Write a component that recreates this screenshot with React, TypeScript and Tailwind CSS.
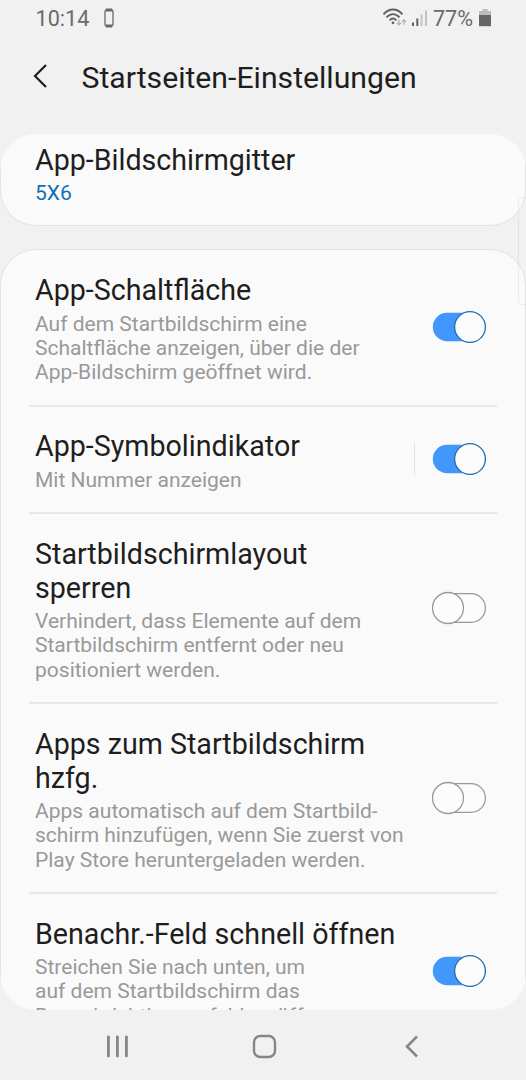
import { ReactNode } from "react";

type ToggleProps = {
  on: boolean;
};

type RowProps = {
  title: ReactNode;
  lines: string[];
  on: boolean;
  split?: boolean;
  last?: boolean;
};

const Toggle = ({ on }: ToggleProps) => (
  <svg width="56" height="34" viewBox="0 0 56 34" className="shrink-0">
    {on ? (
      <>
        <rect x="1.8" y="2.8" width="52" height="28.4" rx="14.2" fill="#4297fd" />
        <circle cx="39" cy="17" r="15.4" fill="#fcfcfc" stroke="#1a6fae" strokeWidth="1.3" />
      </>
    ) : (
      <>
        <rect x="2" y="2.7" width="52.4" height="28.6" rx="14.3" fill="#fcfcfc" stroke="#999" strokeWidth="1.3" />
        <circle cx="17" cy="17" r="15.5" fill="#fcfcfc" stroke="#999" strokeWidth="1.3" />
      </>
    )}
  </svg>
);

const Row = ({ title, lines, on, split, last }: RowProps) => (
  <div>
    <div className="flex items-center justify-between pl-[35px] pr-[39px] pt-[24.5px] pb-[21.4px]">
      <div>
        <h2 className="mb-[3.5px] text-[28.65px] leading-[33.8px] text-[#1e1e1e] whitespace-nowrap">{title}</h2>
        {lines.map((line) => (
          <p key={line} className="text-[21.03px] leading-[24.3px] text-[#999] whitespace-nowrap">
            {line}
          </p>
        ))}
      </div>
      <div className="mb-[4px] flex items-center gap-4">
        {split && <div className="w-px h-8 bg-[#e2e2e2]"></div>}
        <Toggle on={on} />
      </div>
    </div>
    {!last && <div className="-my-px mx-[29px] h-[2px] bg-[#e7e7e7]"></div>}
  </div>
);

const StatusBar = () => (
  <div className="flex h-9 items-center justify-between pl-[35.5px] pr-[35px] text-[#6a6a6a]">
    <div className="flex items-center">
      <span className="mt-px text-[21.6px] leading-9">10:14</span>
      <svg width="10" height="20" viewBox="0 0 10 20" className="ml-[15px]">
        <rect x="1" y="2" width="8" height="16" rx="1.8" fill="none" stroke="currentColor" strokeWidth="1.3" />
        <path d="M2 .6h6l.8 3H1.2zM2 19.4h6l.8-3H1.2z" fill="currentColor" />
      </svg>
    </div>
    <div className="flex items-center">
      <svg width="46" height="20" viewBox="0 0 46 20" fill="none">
        <g stroke="#606060" strokeWidth="1.9">
          <path d="M.5 6.3C6-.2 14-.2 19.5 6.3" />
          <path d="M3.5 9.4c4-4.3 9-4.3 13 0" />
          <path d="M6.6 12.3c2.2-2.2 4.6-2.2 6.8 0" />
        </g>
        <circle cx="10" cy="14.8" r="1.4" fill="#606060" />
        <g stroke="#aaa" strokeWidth="1.1">
          <path d="M16 11.8v5M14 14.8l2 2.2 2-2.2" />
          <path d="M21 16.8v-5M19 13.9l2-2.2 2 2.2" />
        </g>
        <path d="M30 14.5V18M34.3 10.5V18" stroke="#606060" strokeWidth="2" />
        <path d="M38.5 6.5V18M43 2.5V18" stroke="#c2c2c2" strokeWidth="2" />
      </svg>
      <span className="mt-px ml-[4px] text-[21.6px] leading-9">77%</span>
      <svg width="12" height="18" viewBox="0 0 12 18" className="ml-[6px]">
        <path d="M3.5 0h5v2H12v5H0V2h3.5z" fill="#bcbcbc" />
        <path d="M0 6h12v11.2H0z" fill="#666" />
      </svg>
    </div>
  </div>
);

const NavBar = () => (
  <nav className="h-[70px]">
    <svg width="526" height="70" viewBox="0 0 526 70" fill="none" stroke="#868686">
      <path d="M108.4 27v19M117.4 27v19M126.4 27v19" strokeWidth="2.8" strokeLinecap="round" />
      <rect x="254" y="26" width="21" height="21" rx="6.2" strokeWidth="2.4" />
      <path d="M417 26.5L407 36.5l10 10" strokeWidth="2.5" />
    </svg>
  </nav>
);

const App = () => {
  return (
    <div className="w-[526px] h-[1080px] overflow-hidden bg-[#f1f1f1] font-[Roboto,sans-serif]">
      <StatusBar />
      <header className="flex h-[98px] items-start pt-[23px] pl-[31.5px]">
        <svg width="18" height="26" viewBox="0 0 18 26" fill="none" className="mt-[4px]">
          <path d="M14 2L3 13l11 11" stroke="#1e1e1e" strokeWidth="2.2" />
        </svg>
        <h1 className="mt-px ml-[32px] text-[30.2px] leading-9 text-[#1e1e1e] whitespace-nowrap">Startseiten-Einstellungen</h1>
      </header>

      <main className="relative h-[876px] overflow-hidden rounded-[36px]">
        <section className="h-[92px] rounded-b-[36px] border border-t-0 border-[#e3e3e3] bg-[#fafafa] pl-[34px] pt-[9.5px]">
          <h2 className="mb-[3.8px] text-[28.6px] leading-[33.8px] text-[#1e1e1e]">App-Bildschirmgitter</h2>
          <p className="text-[21.05px] leading-[24.3px] text-[#0f70b8]">5X6</p>
        </section>

        <section className="mt-[23px] h-[800px] pt-[0.9px] rounded-t-[36px] bg-[#fafafa] shadow-[inset_0_0_0_1px_#e3e3e3]">
          <Row
            title="App-Schaltfläche"
            lines={["Auf dem Startbildschirm eine", "Schaltfläche anzeigen, über die der", "App-Bildschirm geöffnet wird."]}
            on
          />
          <Row title="App-Symbolindikator" lines={["Mit Nummer anzeigen"]} on split />
          <Row
            title={<>Startbildschirmlayout<br />sperren</>}
            lines={["Verhindert, dass Elemente auf dem", "Startbildschirm entfernt oder neu", "positioniert werden."]}
            on={false}
          />
          <Row
            title={<>Apps zum Startbildschirm<br />hzfg.</>}
            lines={["Apps automatisch auf dem Startbild-", "schirm hinzufügen, wenn Sie zuerst von", "Play Store heruntergeladen werden."]}
            on={false}
          />
          <Row
            title="Benachr.-Feld schnell öffnen"
            lines={["Streichen Sie nach unten, um", "auf dem Startbildschirm das", "Benachrichtigungsfeld zu öffnen."]}
            on
            last
          />
        </section>

        {/* scroll thumb */}
        <div className="absolute right-0 top-[63px] h-[108px] w-2 rounded-l border border-r-0 border-black/5"></div>
      </main>

      <NavBar />
    </div>
  );
};

export default App;
